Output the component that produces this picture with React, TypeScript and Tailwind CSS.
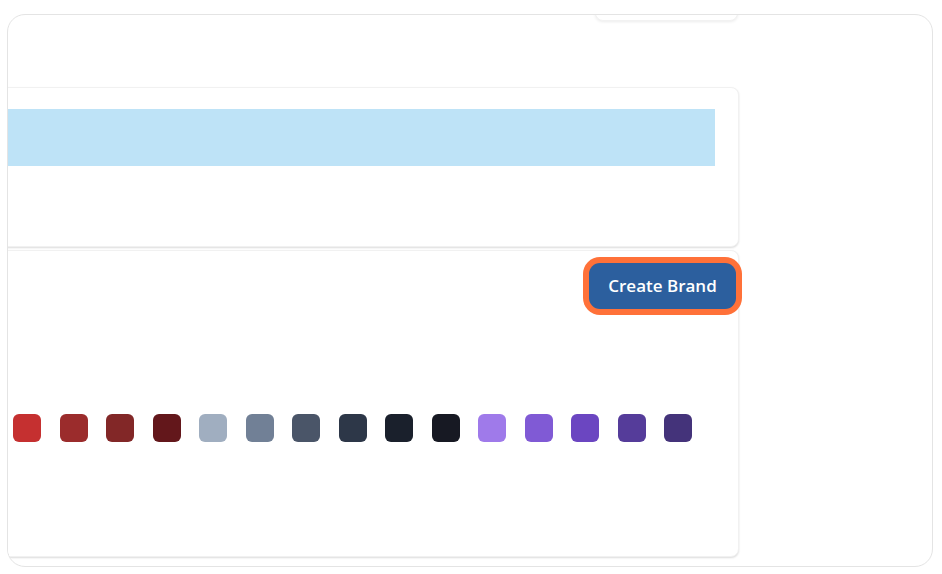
import React from "react";

const swatches = [
  "#c53030", "#9b2c2c", "#822727", "#63171b",
  "#a0aec0", "#718096", "#4a5568", "#2d3748", "#1a202c", "#171923",
  "#9f7aea", "#805ad5", "#6b46c1", "#553c9a", "#44337a",
];

export default function App() {
  return (
    <div className="w-[942px] h-[574px] bg-white pt-[14px] pl-[7px]" style={{ fontFamily: '"Open Sans", "Noto Sans", sans-serif' }}>
      <div className="w-[926px] h-[553px] rounded-[18px] border border-[#e4e4e4] overflow-hidden bg-white">
        <div className="flex flex-col w-[755px] -ml-[24px]">
          <div className="self-end w-[143px] h-[26px] -mt-[20px] mr-[1px] rounded-lg bg-white border border-[#f2f2f2] shadow-[0_1px_3px_rgba(0,0,0,0.08)]" />
          <div className="mt-[66px] h-[160px] rounded-lg bg-white border border-[#f1f1f1] shadow-[0_1px_2px_rgba(0,0,0,0.14)] pl-[23px] pr-[23px] pt-[21px]">
            <div className="h-[57px] bg-[#bee3f7]" />
          </div>
          <div className="mt-[3px] h-[307px] rounded-lg bg-white border border-[#f1f1f1] shadow-[0_1px_2px_rgba(0,0,0,0.14)] flex flex-col">
            <div className="flex justify-end pt-[12px] pr-[2px]">
              <button className="w-[147px] h-[46px] rounded-[11px] bg-[#2c5f9e] text-white text-[17px] font-semibold ring-[6px] ring-[#ff7139] leading-none pb-[2px]">
                Create Brand
              </button>
            </div>
            <div className="flex gap-[18.5px] pl-[28px] mt-[105px]">
              {swatches.map((c) => (
                <div key={c} className="w-[28px] h-[28px] rounded-[6px]" style={{ backgroundColor: c }} />
              ))}
            </div>
          </div>
        </div>
      </div>
    </div>
  );
}
